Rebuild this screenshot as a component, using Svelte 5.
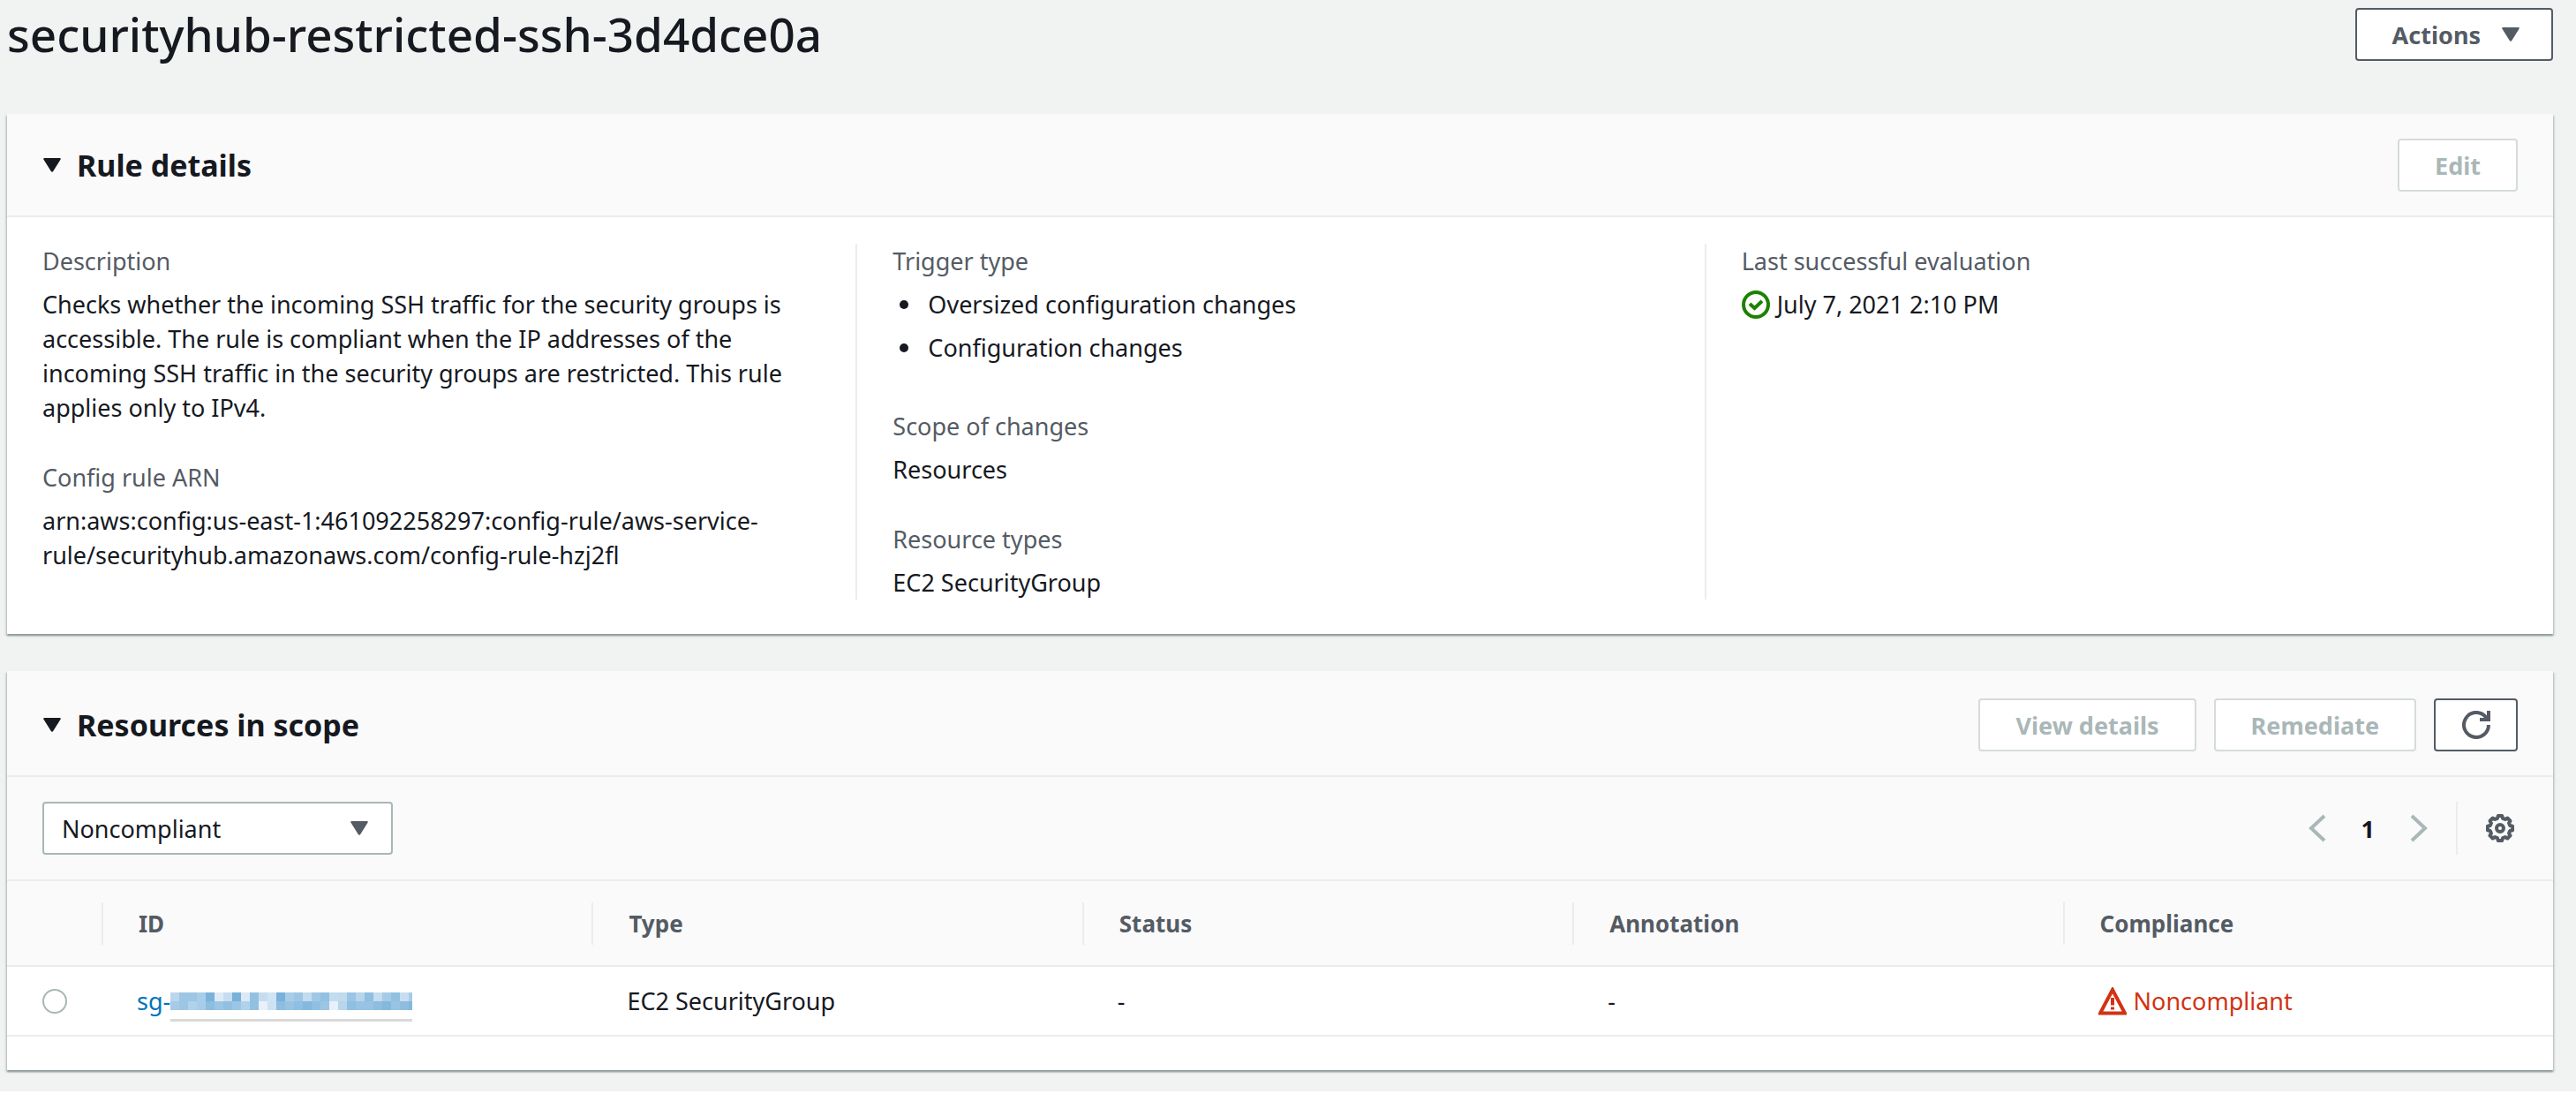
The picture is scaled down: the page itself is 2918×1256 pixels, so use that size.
<script>
  const columns = ['ID', 'Type', 'Status', 'Annotation', 'Compliance'];
  const mosaicTop = ['#bbd7ed', '#9dc6e4', '#9dc6e4', '#a8cde8', '#7ab2db', '#deebf6', '#c6ddf0', '#78b1da', '#dceaf5', '#94c1e2', '#c5ddef', '#d0e4f3', '#78b1da', '#a8cde8', '#9dc6e4', '#c3dcef', '#9fc8e5', '#92c0e1', '#c3dcef', '#c0daee', '#9bc5e4', '#b8d5ec', '#8fbfe1', '#c5ddef', '#a5cbe7', '#92c0e1', '#c8def0', '#a6cce7'];
  const mosaicBottom = ['#a5cbe7', '#9dc6e4', '#b1d2eb', '#a8cde8', '#8dbddf', '#9bc5e4', '#92c0e1', '#9dc6e4', '#b1d2eb', '#92c0e1', '#e8f1f9', '#cde2f2', '#8dbddf', '#98c3e3', '#8fbfe1', '#84b8dd', '#8fbfe1', '#9bc5e4', '#e8f1f9', '#b8d5ec', '#8fbfe1', '#98c3e3', '#98c3e3', '#8dbddf', '#84b8dd', '#98c3e3', '#8dbddf', '#84b8dd'];

  // Outline of an eight-toothed cog: two outer and two inner corners per tooth.
  const corners = [[-9, 14.2], [9, 14.2], [15, 11.6], [30, 11.6]];
  const cog = Array.from({ length: 8 }, (_, tooth) =>
    corners.map(([deg, r]) => {
      const a = ((tooth * 45 + deg) * Math.PI) / 180;
      return `${(16 + r * Math.cos(a)).toFixed(2)},${(16 + r * Math.sin(a)).toFixed(2)}`;
    })
  ).flat().join(' ');

  let compliance = $state('Noncompliant');
  let selected = $state('');
</script>

{#snippet caret()}
  <svg class="caret" viewBox="0 0 20 16" aria-hidden="true"><path d="M1.5 0h17q2 0 1 1.800L11.500 14.500q-1.500 2.500-3 0L.5 1.800Q-.5 0 1.500 0z" fill="currentColor" /></svg>
{/snippet}

<div class="page">
  <header class="top">
    <h1>securityhub-restricted-ssh-3d4dce0a</h1>
    <button class="btn">Actions {@render caret()}</button>
  </header>

  <section class="card">
    <div class="head">
      <h2><button class="toggle" aria-expanded="true">{@render caret()}Rule details</button></h2>
      <button class="btn" disabled>Edit</button>
    </div>
    <div class="details">
      <dl>
        <div>
          <dt>Description</dt>
          <dd>Checks whether the incoming SSH traffic for the security groups is accessible. The rule is compliant when the IP addresses of the incoming SSH traffic in the security groups are restricted. This rule applies only to IPv4.</dd>
        </div>
        <div>
          <dt>Config rule ARN</dt>
          <dd>arn:aws:config:us-east-1:461092258297:config-rule/aws-service-rule/securityhub.amazonaws.com/config-rule-hzj2fl</dd>
        </div>
      </dl>
      <dl>
        <div>
          <dt>Trigger type</dt>
          <dd>
            <ul>
              <li>Oversized configuration changes</li>
              <li>Configuration changes</li>
            </ul>
          </dd>
        </div>
        <div>
          <dt>Scope of changes</dt>
          <dd>Resources</dd>
        </div>
        <div>
          <dt>Resource types</dt>
          <dd>EC2 SecurityGroup</dd>
        </div>
      </dl>
      <dl>
        <div>
          <dt>Last successful evaluation</dt>
          <dd class="flag">
            <svg class="icon ok" viewBox="0 0 32 32" aria-hidden="true"><circle cx="16" cy="16" r="14" /><path d="M9 15l5.500 5L23 12" /></svg>
            July 7, 2021 2:10 PM
          </dd>
        </div>
      </dl>
    </div>
  </section>

  <section class="card">
    <div class="head tall">
      <h2><button class="toggle" aria-expanded="true">{@render caret()}Resources in scope</button></h2>
      <div class="actions">
        <button class="btn" disabled>View details</button>
        <button class="btn" disabled>Remediate</button>
        <button class="btn square" aria-label="Refresh">
          <svg class="icon" viewBox="0 0 32 32" aria-hidden="true"><path d="M30 16A14 14 0 1 1 26 6.200L29 10" /><path d="M30 0v10H20" /></svg>
        </button>
      </div>
    </div>
    <div class="tools">
      <div class="select">
        <select bind:value={compliance} aria-label="Compliance status">
          <option>Noncompliant</option>
          <option>Compliant</option>
          <option>All</option>
        </select>
        {@render caret()}
      </div>
      <nav class="pager" aria-label="Pages">
        <button class="plain" disabled aria-label="Previous page"><svg class="chev" viewBox="0 0 20 32" aria-hidden="true"><path d="M18 2L3 16l15 14" /></svg></button>
        <button class="plain current" aria-current="page">1</button>
        <button class="plain" disabled aria-label="Next page"><svg class="chev" viewBox="0 0 20 32" aria-hidden="true"><path d="M2 2l15 14L2 30" /></svg></button>
        <div class="prefs">
          <button class="plain" aria-label="Preferences">
            <svg class="icon" viewBox="0 0 32 32" aria-hidden="true"><polygon points={cog} /><circle cx="16" cy="16" r="4" /></svg>
          </button>
        </div>
      </nav>
    </div>
    <table>
      <thead>
        <tr>
          <th class="pick"><span class="cell" aria-hidden="true"></span></th>
          {#each columns as name}
            <th scope="col"><span class="cell">{name}</span></th>
          {/each}
        </tr>
      </thead>
      <tbody>
        <tr>
          <td><input type="radio" name="resource" value="sg" bind:group={selected} aria-label="Select resource" /></td>
          <td>
            <a href="#resource">sg-<svg class="mosaic" viewBox="0 0 274 48" aria-hidden="true">
                {#each mosaicTop as fill, i}<rect x={i * 10} y="14" width="10" height="10" {fill} />{/each}
                {#each mosaicBottom as fill, i}<rect x={i * 10} y="24" width="10" height="10" {fill} />{/each}
                <rect x="0" y="44" width="274" height="3" fill="#d9d9d9" />
              </svg></a>
          </td>
          <td>EC2 SecurityGroup</td>
          <td>-</td>
          <td>-</td>
          <td>
            <span class="flag bad">
              <svg class="icon" viewBox="0 0 32 32" aria-hidden="true"><path d="M16 3L2 29.500h28z" /><path d="M16 12v8.500M16 22.500v3" /></svg>
              Noncompliant
            </span>
          </td>
        </tr>
      </tbody>
    </table>
  </section>
</div>

<style>
  :global(body) {
    margin: 0;
    background: #fff;
  }
  .page {
    box-sizing: border-box;
    padding: 8px 26px 24px 8px;
    background: #f1f3f2;
    color: #16191f;
    font: 27px/39px "Noto Sans", "Open Sans", sans-serif;
  }
  h1, h2, dl, dd, ul {
    margin: 0;
    padding: 0;
  }
  button, select {
    font: inherit;
    color: inherit;
  }
  .top {
    display: flex;
    justify-content: space-between;
    align-items: flex-start;
    height: 121px;
  }
  h1 {
    font-size: 53px;
    font-weight: 500;
    line-height: 62px;
  }
  .btn {
    display: flex;
    align-items: center;
    justify-content: center;
    gap: 24px;
    box-sizing: border-box;
    height: 60px;
    padding: 0 40px;
    margin: 0;
    border: 2px solid #545b64;
    border-radius: 4px;
    background: #fff;
    color: #545b64;
    font-weight: 700;
  }
  .top .btn {
    margin-top: 1px;
    padding-right: 36px;
  }
  .btn:disabled {
    border-color: #d5dbdb;
    color: #aab7b8;
  }
  .btn.square {
    width: 95px;
    padding: 0;
  }
  .caret {
    flex: none;
    width: 20px;
    height: 16px;
  }
  .icon, .chev {
    display: block;
    flex: none;
    width: 32px;
    height: 32px;
    fill: none;
    stroke: currentColor;
    stroke-width: 4;
  }
  .icon polygon {
    stroke-linejoin: round;
  }
  .chev {
    width: 20px;
  }
  .card {
    background: #fff;
    box-shadow: 0 2px 2px #879596, 2px 2px 2px #d5dbdb, -2px 2px 2px #d5dbdb;
  }
  .card + .card {
    margin-top: 42px;
  }
  .head {
    display: flex;
    align-items: center;
    justify-content: space-between;
    padding: 28px 40px 27px;
    background: #fafafa;
    border-bottom: 2px solid #eaeded;
  }
  .tall {
    padding-top: 31px;
  }
  h2 {
    font-size: 34px;
    line-height: 44px;
  }
  .toggle {
    display: flex;
    align-items: center;
    gap: 18px;
    margin: 0;
    padding: 0 0 0 1px;
    border: 0;
    background: none;
    font-weight: 700;
  }
  .actions {
    display: flex;
    gap: 20px;
  }
  .details {
    display: grid;
    grid-template-columns: repeat(3, 1fr);
    padding: 30px 0 39px;
  }
  .details dl {
    display: grid;
    align-content: start;
    gap: 40px;
    padding: 0 80px 0 40px;
  }
  .details dl + dl {
    border-left: 2px solid #eaeded;
  }
  dt {
    margin-bottom: 10px;
    color: #545b64;
  }
  dd {
    overflow-wrap: break-word;
  }
  ul {
    padding-left: 8px;
    list-style: none;
  }
  li {
    display: flex;
    align-items: center;
    gap: 22px;
    margin-bottom: 10px;
  }
  li::before {
    content: "";
    width: 10px;
    height: 10px;
    border-radius: 50%;
    background: currentColor;
  }
  .flag {
    display: flex;
    align-items: center;
    gap: 8px;
  }
  .ok {
    color: #1d8102;
  }
  .bad {
    color: #d13212;
  }
  .tools {
    display: flex;
    align-items: center;
    justify-content: space-between;
    padding: 28px 40px;
    background: #fafafa;
    border-bottom: 2px solid #eaeded;
  }
  .select {
    display: grid;
    align-items: center;
    color: #545b64;
  }
  .select > :global(*) {
    grid-area: 1 / 1;
  }
  .select .caret {
    justify-self: end;
    margin-right: 28px;
    pointer-events: none;
  }
  select {
    appearance: none;
    box-sizing: border-box;
    width: 397px;
    height: 60px;
    padding: 0 20px;
    border: 2px solid #aab7b8;
    border-radius: 4px;
    background: #fff;
    color: #16191f;
  }
  .pager {
    display: flex;
    align-items: center;
    gap: 40px;
  }
  .plain {
    margin: 0;
    padding: 0;
    border: 0;
    background: none;
    color: #545b64;
  }
  .plain:disabled {
    color: #aab7b8;
  }
  .plain.current {
    color: #16191f;
    font-weight: 700;
  }
  .prefs {
    display: flex;
    align-items: center;
    height: 60px;
    margin-left: -8px;
    padding-left: 32px;
    padding-right: 4px;
    border-left: 2px solid #eaeded;
  }
  table {
    width: 100%;
    border-collapse: collapse;
    table-layout: fixed;
  }
  .card:last-child {
    padding-bottom: 38px;
  }
  th {
    height: 95px;
    padding: 0;
    background: #fafafa;
    border-bottom: 2px solid #eaeded;
    color: #545b64;
    font-size: 26px;
    text-align: left;
  }
  th .cell {
    display: block;
    height: 48px;
    line-height: 48px;
    padding-left: 40px;
    border-left: 2px solid #eaeded;
  }
  th.pick .cell {
    border: 0;
  }
  .pick {
    width: 107px;
  }
  td {
    height: 77px;
    padding: 0 0 0 40px;
    border-bottom: 2px solid #eaeded;
  }
  input {
    appearance: none;
    display: block;
    box-sizing: border-box;
    width: 28px;
    height: 28px;
    margin: 0;
    border: 2px solid #aab7b8;
    border-radius: 50%;
    background: #fff;
  }
  a {
    display: flex;
    align-items: center;
    color: #0073bb;
    text-decoration: none;
  }
  .mosaic {
    width: 274px;
    height: 48px;
  }
</style>
